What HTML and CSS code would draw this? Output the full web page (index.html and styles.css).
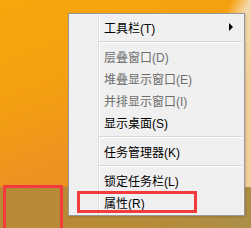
FILE: index.html
```html
<!DOCTYPE html>
<html lang="zh-CN">
<head>
<meta charset="utf-8">
<link rel="stylesheet" href="styles.css">
</head>
<body>
<div class="desktop">
  <div class="wallpaper"></div>
  <div class="taskbar"></div>

  <div class="menu">
    <div class="item"><span>工具栏(T)</span><span class="arrow"></span></div>
    <div class="sep"></div>
    <div class="item disabled">层叠窗口(D)</div>
    <div class="item disabled">堆叠显示窗口(E)</div>
    <div class="item disabled">并排显示窗口(I)</div>
    <div class="item">显示桌面(S)</div>
    <div class="sep"></div>
    <div class="item">任务管理器(K)</div>
    <div class="sep"></div>
    <div class="item">锁定任务栏(L)</div>
    <div class="item">属性(R)</div>
  </div>

  <div class="mark mark-taskbar"></div>
  <div class="mark mark-props"></div>
</div>
</body>
</html>
```

FILE: styles.css
```css
html, body {
  margin: 0;
  padding: 0;
}

body {
  width: 251px;
  height: 228px;
  overflow: hidden;
  font-family: "Liberation Sans", "Noto Sans CJK SC", sans-serif;
}

.desktop {
  position: relative;
  width: 251px;
  height: 228px;
  display: flex;
  flex-direction: column;
}

.wallpaper {
  flex: 1;
  background:
    linear-gradient(118deg, rgba(0,0,0,0) 0, rgba(0,0,0,0) 205px, rgba(244,220,182,0.95) 222px, rgba(242,214,170,0.9) 260px),
    linear-gradient(160deg, #f7a80c 0%, #f5a010 35%, #ee9320 65%, #e88c24 100%);
}

.taskbar {
  height: 41px;
  background: linear-gradient(to right, #b98a36 0%, #b68a38 60%, #ad8f48 100%);
}

.menu {
  position: absolute;
  left: 68px;
  top: 13px;
  width: 177px;
  box-sizing: border-box;
  border: 1px solid #979797;
  background-color: #f0f0f0;
  background-image: linear-gradient(to right, transparent 29px, #dcdcdc 29px, #dcdcdc 30px, #ffffff 30px, #ffffff 31px, transparent 31px);
  padding: 2px 2px 2px 2px;
  display: flex;
  flex-direction: column;
  box-shadow: 1px 1px 2px rgba(0,0,0,0.15);
}

.item {
  height: 22px;
  display: flex;
  align-items: center;
  justify-content: space-between;
  padding-left: 33px;
  padding-right: 9px;
  font-size: 12px;
  color: #000;
  white-space: nowrap;
}

.item.disabled {
  color: #6d6d6d;
}

.arrow {
  width: 0;
  height: 0;
  border-top: 4px solid transparent;
  border-bottom: 4px solid transparent;
  border-left: 4px solid #000;
}

.sep {
  height: 7px;
  margin-left: 28px;
  margin-right: 0;
  display: flex;
  flex-direction: column;
  justify-content: center;
}

.sep::before {
  content: "";
  display: block;
  height: 1px;
  background: #d7d7d7;
}

.sep::after {
  content: "";
  display: block;
  height: 1px;
  background: #ffffff;
}

.mark {
  position: absolute;
  border: 3px solid #f23c3c;
  box-sizing: border-box;
}

.mark-taskbar {
  left: 3px;
  top: 185px;
  width: 60px;
  height: 50px;
}

.mark-props {
  left: 77px;
  top: 191px;
  width: 120px;
  height: 22px;
}
```
